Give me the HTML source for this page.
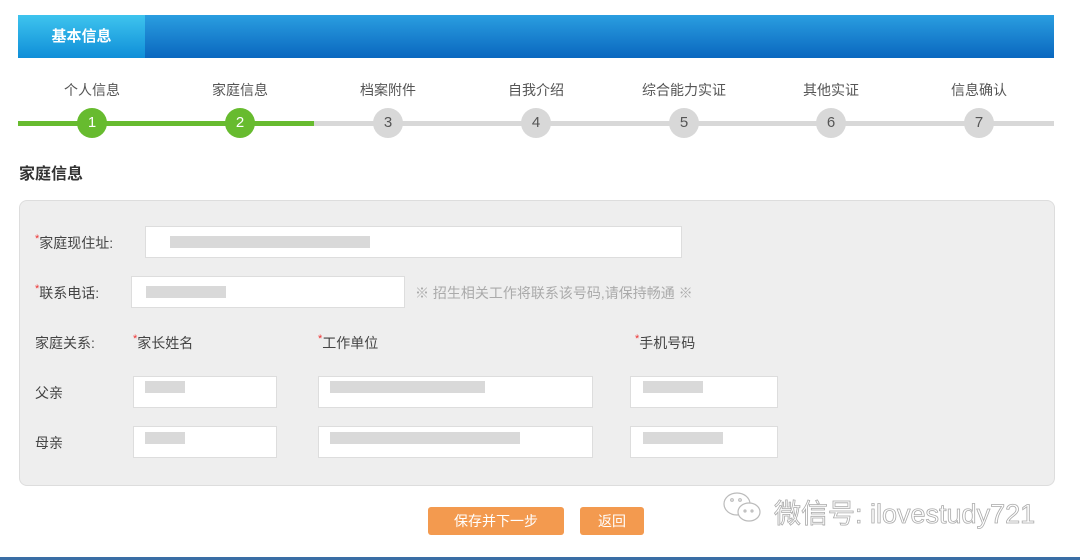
<!DOCTYPE html>
<html><head><meta charset="utf-8"><style>
body{margin:0;width:1080px;height:560px;background:#fff;font-family:"Liberation Sans","Noto Sans CJK SC",sans-serif;position:relative;overflow:hidden;color:#333}
.a{position:absolute}
.hdr{left:18px;top:15px;width:1036px;height:43px;background:linear-gradient(#2a9ee0,#0a67bf)}
.tab{left:18px;top:15px;width:127px;height:43px;background:linear-gradient(#3ec4ee,#0f8ed8);color:#fff;font-weight:bold;font-size:15px;line-height:43px;text-align:center}
.line{top:121px;height:5px}
.c{width:30px;height:30px;border-radius:50%;top:108px;color:#fff;text-align:center;line-height:30px;font-size:15px}
.g{background:#67bb2f}.gr{background:#d8d8d8;color:#555}
.lb{top:80px;font-size:14px;color:#555;width:140px;text-align:center}
.panel{left:19px;top:200px;width:1034px;height:284px;background:#eee;border:1px solid #ddd;border-radius:8px}
.t{font-size:14px;color:#444}
.t i{color:#e33;font-style:normal;font-size:11px;vertical-align:top}
.in{background:#fff;border:1px solid #ddd;height:30px}
.bl{background:#d9d9d9;height:12px}
.btn{background:#f39a4f;color:#fff;font-size:14px;text-align:center;line-height:28px;height:28px;border-radius:3px;top:507px}
</style></head><body>
<div class="a hdr"></div><div class="a tab">基本信息</div>
<div class="a line" style="left:18px;width:296px;background:#67bb2f"></div>
<div class="a line" style="left:314px;width:740px;background:#d8d8d8"></div>
<div class="a lb" style="left:22px">个人信息</div>
<div class="a lb" style="left:170px">家庭信息</div>
<div class="a lb" style="left:318px">档案附件</div>
<div class="a lb" style="left:466px">自我介绍</div>
<div class="a lb" style="left:614px">综合能力实证</div>
<div class="a lb" style="left:761px">其他实证</div>
<div class="a lb" style="left:909px">信息确认</div>
<div class="a c g" style="left:77px">1</div>
<div class="a c g" style="left:225px">2</div>
<div class="a c gr" style="left:373px">3</div>
<div class="a c gr" style="left:521px">4</div>
<div class="a c gr" style="left:669px">5</div>
<div class="a c gr" style="left:816px">6</div>
<div class="a c gr" style="left:964px">7</div>
<div class="a" style="left:19px;top:160px;font-size:16px;font-weight:bold;color:#333">家庭信息</div>
<div class="a panel"></div>
<div class="a t" style="left:35px;top:233px"><i>*</i>家庭现住址:</div>
<div class="a in" style="left:145px;top:226px;width:535px"></div>
<div class="a bl" style="left:170px;top:236px;width:200px"></div>
<div class="a t" style="left:35px;top:283px"><i>*</i>联系电话:</div>
<div class="a in" style="left:131px;top:276px;width:272px"></div>
<div class="a bl" style="left:146px;top:286px;width:80px"></div>
<div class="a" style="left:415px;top:283px;font-size:14px;color:#aaa">※ 招生相关工作将联系该号码,请保持畅通 ※</div>
<div class="a t" style="left:35px;top:333px">家庭关系:</div>
<div class="a t" style="left:133px;top:333px"><i>*</i>家长姓名</div>
<div class="a t" style="left:318px;top:333px"><i>*</i>工作单位</div>
<div class="a t" style="left:635px;top:333px"><i>*</i>手机号码</div>
<div class="a t" style="left:35px;top:383px">父亲</div>
<div class="a t" style="left:35px;top:433px">母亲</div>
<div class="a in" style="left:133px;top:376px;width:142px"></div>
<div class="a in" style="left:318px;top:376px;width:273px"></div>
<div class="a in" style="left:630px;top:376px;width:146px"></div>
<div class="a in" style="left:133px;top:426px;width:142px"></div>
<div class="a in" style="left:318px;top:426px;width:273px"></div>
<div class="a in" style="left:630px;top:426px;width:146px"></div>
<div class="a bl" style="left:145px;top:381px;width:40px"></div>
<div class="a bl" style="left:330px;top:381px;width:155px"></div>
<div class="a bl" style="left:643px;top:381px;width:60px"></div>
<div class="a bl" style="left:145px;top:432px;width:40px"></div>
<div class="a bl" style="left:330px;top:432px;width:190px"></div>
<div class="a bl" style="left:643px;top:432px;width:80px"></div>
<div class="a btn" style="left:428px;width:136px">保存并下一步</div>
<div class="a btn" style="left:580px;width:64px">返回</div>
<div class="a" style="left:722px;top:490px;width:44px;height:40px">
<svg width="44" height="40" viewBox="0 0 44 40" fill="#fff" stroke="#bbb" stroke-width="1.2"><ellipse cx="15" cy="14" rx="13" ry="11"/><ellipse cx="27" cy="22" rx="11" ry="9"/><circle cx="10" cy="10" r="1.3"/><circle cx="18" cy="10" r="1.3"/><circle cx="23" cy="21" r="1"/><circle cx="30" cy="21" r="1"/></svg></div>
<div class="a" style="left:774px;top:492px;font-size:27px;color:#fff;-webkit-text-stroke:0.8px #aaa;font-family:'Liberation Sans','Noto Sans CJK SC',sans-serif">微信号: ilovestudy721</div>
<div class="a" style="left:0;top:557px;width:1080px;height:3px;background:#3a6ea5"></div>
</body></html>
